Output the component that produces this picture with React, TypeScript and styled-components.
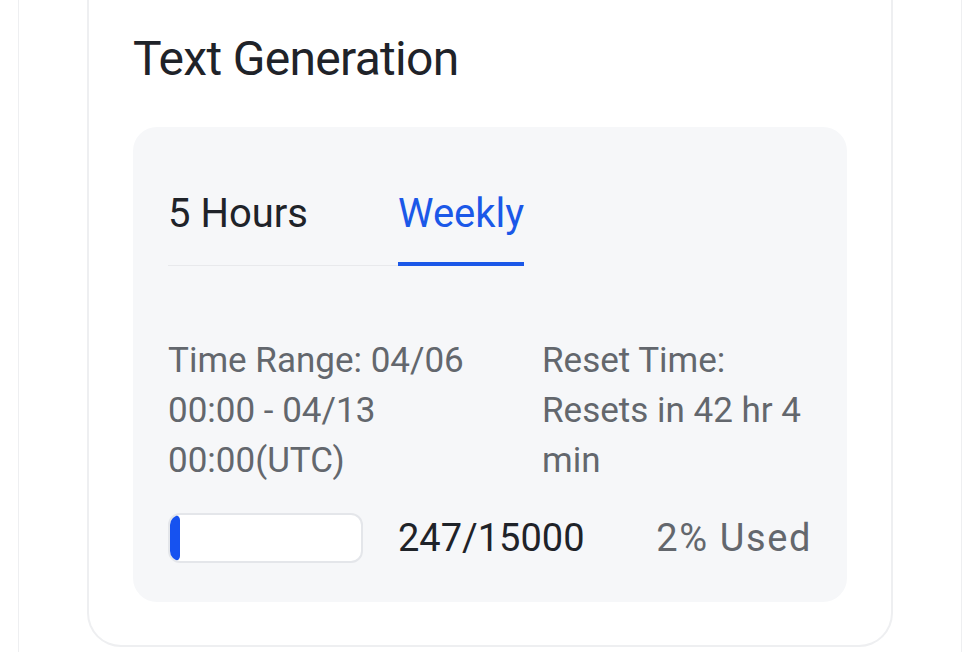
import React from "react";
import styled, { createGlobalStyle } from "styled-components";

const GlobalStyle = createGlobalStyle`
  html, body {
    margin: 0;
    padding: 0;
    background: #ffffff;
  }
  body {
    font-family: Roboto, "Noto Sans", "Liberation Sans", sans-serif;
    -webkit-font-smoothing: antialiased;
  }
  * { box-sizing: border-box; }
`;

const Frame = styled.div`
  margin-left: 18px;
  width: 944px;
  height: 652px;
  padding: 0 68px;
  border-left: 1px solid #eeeff1;
  border-right: 1px solid #eeeff1;
  overflow: hidden;
`;

const Card = styled.section`
  border: 2px solid #eeeff1;
  border-top: none;
  border-radius: 0 0 34px 34px;
  padding: 30px 44px 43px;
  background: #ffffff;
`;

const Title = styled.h2`
  margin: 0 0 40px;
  font-size: 48px;
  font-weight: 400;
  line-height: normal;
  color: #1f2329;
  letter-spacing: -0.7px;
`;

const Panel = styled.div`
  background: #f6f7f9;
  border-radius: 24px;
  padding: 63px 35px 39px;
`;

const TabList = styled.div`
  display: inline-flex;
  gap: 90px;
  border-bottom: 1px solid #e8e9ec;
`;

const Tab = styled.button<{ $active?: boolean }>`
  appearance: none;
  background: none;
  border: none;
  padding: 0 0 25px;
  margin: 0 0 -1px;
  font-family: inherit;
  font-size: 40px;
  font-weight: 400;
  line-height: normal;
  color: ${(p) => (p.$active ? "#1b58e8" : "#1f2329")};
  border-bottom: 4px solid ${(p) => (p.$active ? "#1b58e8" : "transparent")};
  cursor: pointer;
`;

const InfoGrid = styled.div`
  display: grid;
  grid-template-columns: 340px 270px;
  column-gap: 34px;
  margin-top: 70px;
  font-size: 35px;
  line-height: 50px;
  color: #63676d;
`;

const InfoCell = styled.div``;

const UsageRow = styled.div`
  display: flex;
  align-items: center;
  margin-top: 27px;
`;

const Bar = styled.div`
  width: 195px;
  height: 50px;
  background: #ffffff;
  border: 2px solid #e4e6ea;
  border-radius: 12px;
  overflow: hidden;
`;

const Fill = styled.div`
  height: 100%;
  background: #1652f0;
  border-radius: 8px;
`;

const Count = styled.span`
  margin-left: 35px;
  font-size: 38px;
  color: #1f2329;
`;

const Used = styled.span`
  margin-left: auto;
  font-size: 38px;
  letter-spacing: 1.6px;
  color: #63676d;
`;

export default function App() {
  const used = 247;
  const total = 15000;
  const pct = Math.round((used / total) * 100);
  return (
    <>
      <GlobalStyle />
      <Frame>
        <Card>
          <Title>Text Generation</Title>
          <Panel>
            <TabList>
              <Tab>5 Hours</Tab>
              <Tab $active>Weekly</Tab>
            </TabList>
            <InfoGrid>
              <InfoCell>Time Range: 04/06 00:00 - 04/13 00:00(UTC)</InfoCell>
              <InfoCell>Reset Time: Resets in 42 hr 4 min</InfoCell>
            </InfoGrid>
            <UsageRow>
              <Bar>
                <Fill style={{ width: `max(${pct}%, 10px)` }} />
              </Bar>
              <Count>
                {used}/{total}
              </Count>
              <Used>{pct}% Used</Used>
            </UsageRow>
          </Panel>
        </Card>
      </Frame>
    </>
  );
}
